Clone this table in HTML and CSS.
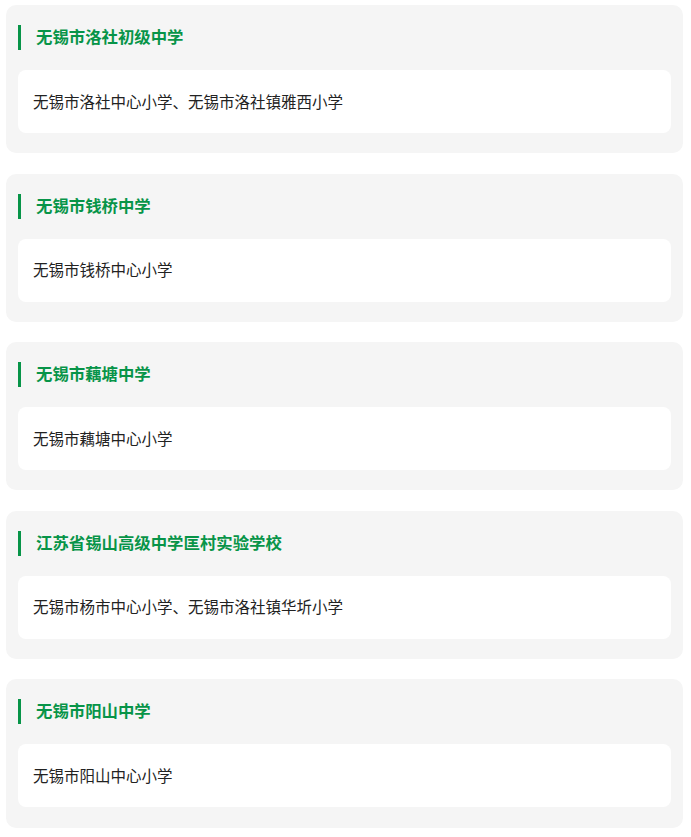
FILE: index.html
```html
<!DOCTYPE html>
<html lang="zh-CN">
<head>
<meta charset="utf-8">
<title>学校对口</title>
<link rel="stylesheet" href="styles.css">
</head>
<body>
<div class="list">
  <section class="card">
    <h2 class="title">无锡市洛社初级中学</h2>
    <div class="box">无锡市洛社中心小学、无锡市洛社镇雅西小学</div>
  </section>
  <section class="card">
    <h2 class="title">无锡市钱桥中学</h2>
    <div class="box">无锡市钱桥中心小学</div>
  </section>
  <section class="card">
    <h2 class="title">无锡市藕塘中学</h2>
    <div class="box">无锡市藕塘中心小学</div>
  </section>
  <section class="card">
    <h2 class="title">江苏省锡山高级中学匡村实验学校</h2>
    <div class="box">无锡市杨市中心小学、无锡市洛社镇华圻小学</div>
  </section>
  <section class="card">
    <h2 class="title">无锡市阳山中学</h2>
    <div class="box">无锡市阳山中心小学</div>
  </section>
</div>
</body>
</html>
```
FILE: styles.css
```css
html, body {
  margin: 0;
  padding: 0;
  background: #ffffff;
}
body {
  font-family: "Noto Sans CJK SC", "Noto Sans", sans-serif;
}
.list {
  padding: 5px 8px 0 6px;
  display: flex;
  flex-direction: column;
  gap: 20.3px;
}
.card {
  background: #f5f5f5;
  border-radius: 10px;
  padding: 20px 12px 20.3px 12px;
  display: flex;
  flex-direction: column;
  gap: 20px;
}
.title {
  margin: 0;
  height: 25px;
  box-sizing: border-box;
  display: flex;
  align-items: center;
  border-left: 3px solid #079448;
  padding: 0 0 2px 15px;
  font-size: 16.4px;
  font-weight: 700;
  color: #079448;
  line-height: 23px;
}
.box {
  background: #ffffff;
  border-radius: 8px;
  height: 63px;
  box-sizing: border-box;
  display: flex;
  align-items: center;
  padding: 0 0 2px 15px;
  font-size: 15.5px;
  color: #222222;
}
```
